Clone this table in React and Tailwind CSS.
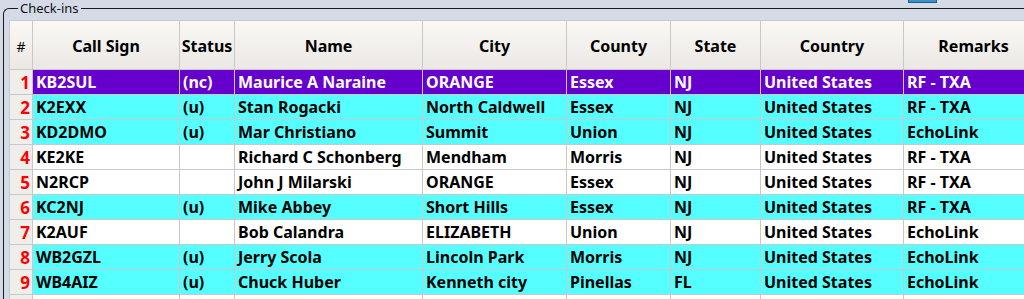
import React from "react";

const rows = [
  ["KB2SUL", "(nc)", "Maurice A Naraine", "ORANGE", "Essex", "NJ", "United States", "RF - TXA", "p"],
  ["K2EXX", "(u)", "Stan Rogacki", "North Caldwell", "Essex", "NJ", "United States", "RF - TXA", "c"],
  ["KD2DMO", "(u)", "Mar Christiano", "Summit", "Union", "NJ", "United States", "EchoLink", "c"],
  ["KE2KE", "", "Richard C Schonberg", "Mendham", "Morris", "NJ", "United States", "RF - TXA", "w"],
  ["N2RCP", "", "John J Milarski", "ORANGE", "Essex", "NJ", "United States", "RF - TXA", "w"],
  ["KC2NJ", "(u)", "Mike Abbey", "Short Hills", "Essex", "NJ", "United States", "RF - TXA", "c"],
  ["K2AUF", "", "Bob Calandra", "ELIZABETH", "Union", "NJ", "United States", "EchoLink", "w"],
  ["WB2GZL", "(u)", "Jerry Scola", "Lincoln Park", "Morris", "NJ", "United States", "EchoLink", "c"],
  ["WB4AIZ", "(u)", "Chuck Huber", "Kenneth city", "Pinellas", "FL", "United States", "EchoLink", "c"],
  ["", "", "", "", "", "", "", "", "w"],
];

const headers = ["Call Sign", "Status", "Name", "City", "County", "State", "Country", "Remarks"];

const rowBg = {
  p: "bg-[#6600cc] text-white",
  c: "bg-[#55ffff] text-black",
  w: "bg-white text-black",
};

export default function App() {
  return (
    <div
      className="relative w-[1024px] h-[299px] overflow-hidden bg-[#d4dbe7]"
      style={{ fontFamily: '"Noto Sans", "Open Sans", sans-serif' }}
    >
      <div className="absolute top-0 left-[908px] w-[29px] h-[3px] bg-[#3a92c4] border-x border-b border-[#1d5f88]" />
      <fieldset className="ml-[3px] border-l border-t border-[#1a1a1a] rounded-tl-[6px] pl-[5px] pt-[3px]">
        <legend className="ml-[9px] px-[2px] text-[13px] leading-[17px] text-[#111]">Check-ins</legend>
        <div className="grid grid-cols-[22px_146px_54px_187px_143px_103px_89px_142px_139px] grid-rows-[48px] auto-rows-[24px] gap-px bg-[#c8c8c8] pl-px pt-px w-max">
          <div className="flex items-center justify-center pt-[2px] bg-gradient-to-b from-[#faf8f5] to-[#ebe8e4] text-[14px] text-black">
            #
          </div>
          {headers.map((h) => (
            <div
              key={h}
              className="flex items-center justify-center pt-[2px] bg-gradient-to-b from-[#faf8f5] to-[#ebe8e4] text-[16px] font-bold text-black"
            >
              {h}
            </div>
          ))}
          {rows.map((r, i) => (
            <React.Fragment key={i}>
              <div className="flex items-center justify-end pr-[2px] pt-px bg-[#f0eeeb] text-[17px] font-bold text-[#ff0000] leading-[23px]">
                {r[0] ? i + 1 : ""}
              </div>
              {r.slice(0, 8).map((c, j) => (
                <div
                  key={j}
                  className={`flex items-center pl-[3px] pt-px text-[16px] font-bold leading-[23px] whitespace-nowrap ${rowBg[r[8]]}`}
                >
                  {c}
                </div>
              ))}
            </React.Fragment>
          ))}
        </div>
      </fieldset>
    </div>
  );
}
